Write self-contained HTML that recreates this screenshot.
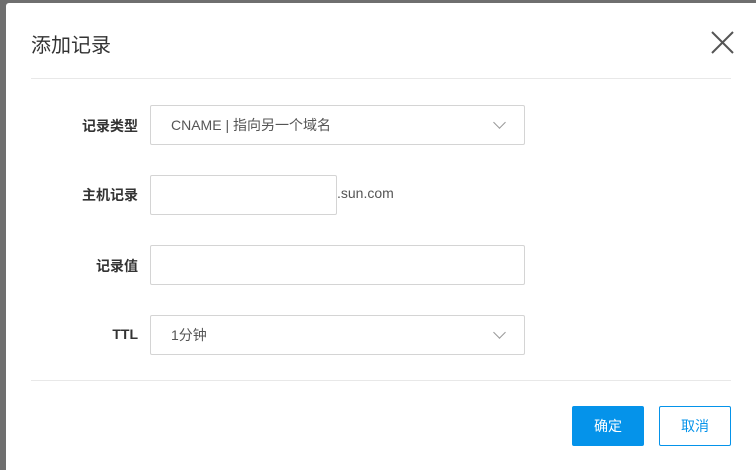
<!DOCTYPE html>
<html><head><meta charset="utf-8"><style>
body{margin:0;width:756px;height:470px;background:#6f6f6f;position:relative;overflow:hidden;font-family:"Liberation Sans","Noto Sans CJK SC",sans-serif;}
.m{position:absolute;left:6px;top:3px;right:0;bottom:0;background:#fff;border-radius:3px 0 0 0;}
.t{position:absolute;left:31px;top:29px;font-size:20px;color:#333;}
.hr{position:absolute;left:31px;width:700px;height:1px;background:#e8e8e8;}
.lab{position:absolute;width:108px;left:30px;text-align:right;font-size:14px;font-weight:bold;color:#333;}
.in{position:absolute;left:150px;height:40px;border:1px solid #d4d4d4;border-radius:2px;box-sizing:border-box;font-size:14px;color:#555;line-height:38px;padding-left:20px;}
.ch{position:absolute;right:20px;top:12px;width:8px;height:8px;border-right:1px solid #999;border-bottom:1px solid #999;transform:rotate(45deg);}
.b{position:absolute;top:406px;height:40px;width:72px;box-sizing:border-box;border-radius:2px;font-size:14px;text-align:center;line-height:38px;}
</style></head><body>
<div class="m"></div>
<div class="t">添加记录</div>
<svg style="position:absolute;left:711px;top:31px" width="23" height="23"><path d="M1 1L22 22M22 1L1 22" stroke="#555" stroke-width="2"/></svg>
<div class="hr" style="top:78px"></div>
<div class="lab" style="top:116px">记录类型</div>
<div class="in" style="top:105px;width:375px">CNAME | 指向另一个域名<div class="ch"></div></div>
<div class="lab" style="top:185px">主机记录</div>
<div class="in" style="top:175px;width:187px"></div>
<div style="position:absolute;left:337px;top:185px;font-size:14px;color:#555">.sun.com</div>
<div class="lab" style="top:256px">记录值</div>
<div class="in" style="top:245px;width:375px"></div>
<div class="lab" style="top:326px">TTL</div>
<div class="in" style="top:315px;width:375px">1分钟<div class="ch"></div></div>
<div class="hr" style="top:380px"></div>
<div class="b" style="left:572px;background:#0593ea;color:#fff;border:1px solid #0593ea">确定</div>
<div class="b" style="left:659px;background:#fff;color:#0593ea;border:1px solid #0593ea">取消</div>
</body></html>
